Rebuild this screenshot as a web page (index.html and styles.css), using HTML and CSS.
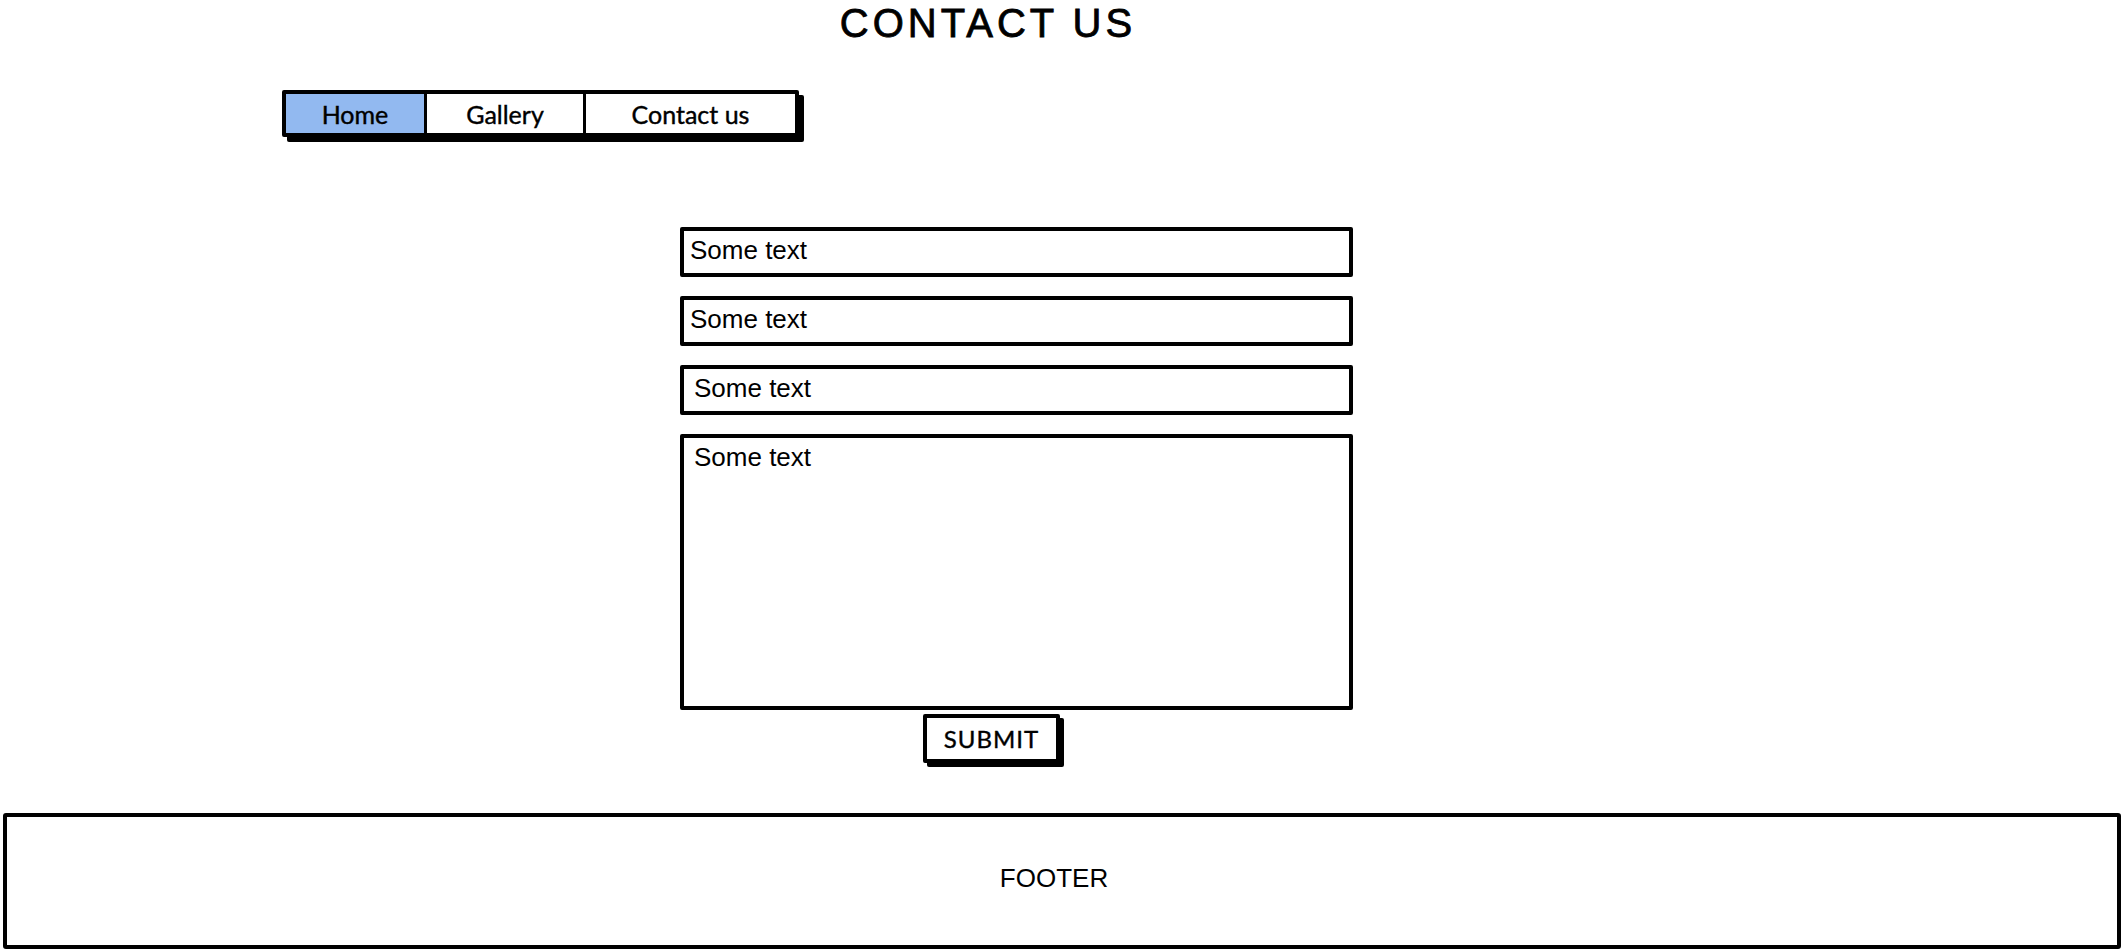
FILE: index.html
```html
<!DOCTYPE html>
<html lang="en">
<head>
    <meta charset="UTF-8">
    <meta name="viewport" content="width=device-width, initial-scale=1.0">
    <title>Contact us</title>
    <link rel="stylesheet" href="styles.css">
</head>
<body>
    <h1 class="page-title">CONTACT US</h1>

    <nav class="menu">
        <a href="index.html" class="menu-item menu-home active">Home</a>
        <a href="gallery.html" class="menu-item menu-gallery">Gallery</a>
        <a href="contact.html" class="menu-item menu-contact">Contact us</a>
    </nav>

    <form class="contact-form" onsubmit="return false;">
        <input type="text" class="field" value="Some text">
        <input type="text" class="field" value="Some text">
        <input type="text" class="field field-indent" value="Some text">
        <textarea class="field field-indent message">Some text</textarea>
        <button type="submit" class="submit">SUBMIT</button>
    </form>

    <footer class="footer">FOOTER</footer>
</body>
</html>
```

FILE: styles.css
```css
body {
    margin: 0;
    background-color: #fff;
    color: #000;
    font-family: "Liberation Sans", Arial, sans-serif;
    overflow: hidden;
}
.page-title {
    margin: 0;
    padding-right: 148px;
    font-size: 40px;
    line-height: 46px;
    font-weight: normal;
    letter-spacing: 4px;
    -webkit-text-stroke: 0.8px #000;
    text-align: center;
}
.menu {
    display: flex;
    width: 517px;
    height: 47px;
    box-sizing: border-box;
    margin: 44px 0 0 282px;
    border: 4px solid #000;
    border-radius: 2px;
    box-shadow: 5px 5px 0 #000;
    background-color: #fff;
}
.menu-item {
    display: flex;
    align-items: center;
    justify-content: center;
    box-sizing: border-box;
    font-family: Lato, "Noto Sans", sans-serif;
    font-size: 25px;
    -webkit-text-stroke: 0.4px #000;
    color: #000;
    text-decoration: none;
}
.menu-item + .menu-item {
    border-left: 3px solid #000;
}
.menu-home {
    width: 138px;
}
.menu-gallery {
    width: 159px;
}
.menu-contact {
    width: 212px;
}
.menu-item.active {
    background-color: #92b9f0;
}
.contact-form {
    display: flex;
    flex-direction: column;
    gap: 19px;
    width: 673px;
    margin: 90px 0 0 680px;
}
.field {
    display: block;
    width: 100%;
    height: 50px;
    box-sizing: border-box;
    margin: 0;
    padding: 0 6px 4px;
    border: 4px solid #000;
    border-radius: 2px;
    background-color: #fff;
    color: #000;
    font-family: "Liberation Sans", Arial, sans-serif;
    font-size: 26px;
    outline: none;
}
.field-indent {
    padding-left: 10px;
}
.message {
    height: 276px;
    padding-top: 4px;
    line-height: 30px;
    resize: none;
}
.submit {
    width: 137px;
    height: 49px;
    margin: -15px 0 0 243px;
    padding: 0;
    border: 4px solid #000;
    border-radius: 2px;
    background-color: #fff;
    box-shadow: 4px 4px 0 #000;
    color: #000;
    font-family: Lato, "Noto Sans", sans-serif;
    font-size: 24px;
    letter-spacing: 1px;
    -webkit-text-stroke: 0.4px #000;
    cursor: pointer;
}
.footer {
    display: flex;
    align-items: center;
    justify-content: center;
    height: 136px;
    box-sizing: border-box;
    margin: 50px 3px 0;
    padding: 0 16px 6px 0;
    border: 4px solid #000;
    border-radius: 3px;
    font-size: 26px;
}
```
